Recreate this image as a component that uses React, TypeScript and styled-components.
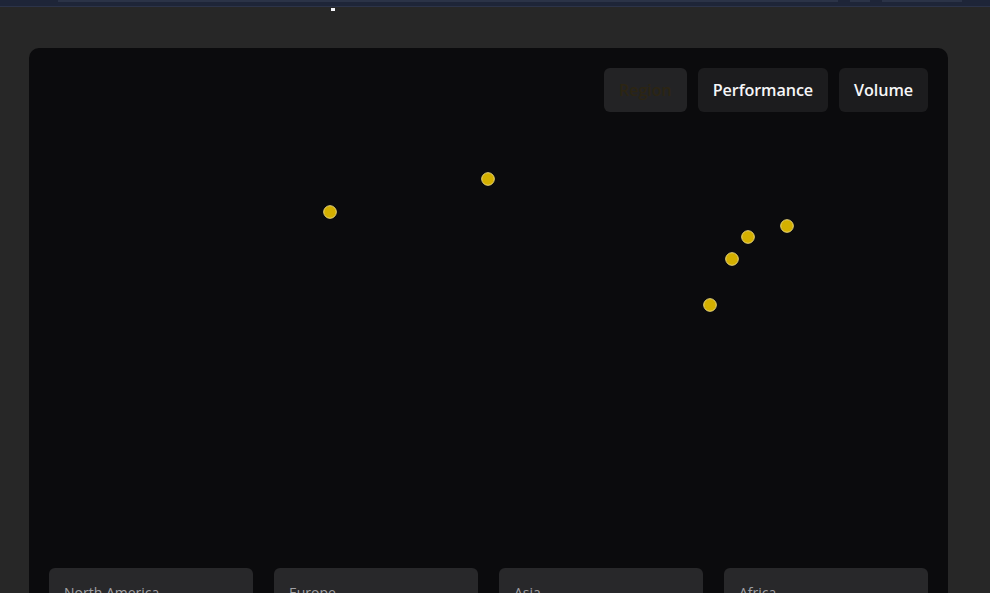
import React from "react";
import styled, { createGlobalStyle } from "styled-components";

const Global = createGlobalStyle`
  html, body { margin: 0; padding: 0; background: #272727; overflow: hidden; }
  body { font-family: "Open Sans", "Liberation Sans", sans-serif; }
`;

const TopBar = styled.div`
  position: relative;
  display: flex;
  align-items: flex-start;
  gap: 12px;
  height: 6px;
  padding-left: 58px;
  background: #1e2538;
  border-bottom: 1px solid #2c3348;
`;

const TopTrack = styled.div<{ $width: number }>`
  height: 2px;
  width: ${(p) => p.$width}px;
  background: #2b3347;
`;

const Marker = styled.div`
  position: absolute;
  left: 331px;
  top: 8px;
  width: 4px;
  height: 3px;
  background: #f4f4f8;
`;

const Main = styled.div`
  padding: 41px 42px 0 29px;
`;

const Card = styled.div`
  background: #0b0b0d;
  border-radius: 10px;
  padding: 20px 20px 0 20px;
  height: 600px;
  box-sizing: border-box;
`;

const Toolbar = styled.div`
  display: flex;
  justify-content: flex-end;
  gap: 11px;
`;

const Toggle = styled.button<{ $active?: boolean }>`
  height: 44px;
  padding: 0 15px;
  border: none;
  border-radius: 6px;
  font-family: "Open Sans", "Liberation Sans", sans-serif;
  font-weight: 600;
  font-size: 16.2px;
  letter-spacing: -0.1px;
  background: ${(p) => (p.$active ? "#232325" : "#1c1c1e")};
  color: ${(p) => (p.$active ? "#2c2513" : "#f6f6f8")};
  cursor: pointer;
`;

const Chart = styled.svg`
  display: block;
  width: 879px;
  height: 456px;
`;

const Grid = styled.div`
  display: grid;
  grid-template-columns: repeat(4, 1fr);
  gap: 21px;
`;

const RegionCard = styled.div`
  background: #28282a;
  border-radius: 6px;
  height: 90px;
  padding: 15px;
  box-sizing: border-box;
  color: #a0a0a4;
  font-size: 14px;
`;

const dots = [
  { x: 281, y: 100 },
  { x: 439, y: 67 },
  { x: 738, y: 114 },
  { x: 699, y: 125 },
  { x: 683, y: 147 },
  { x: 661, y: 193 },
];

const regions = ["North America", "Europe", "Asia", "Africa"];

export default function App() {
  return (
    <>
      <Global />
      <TopBar>
        <TopTrack $width={780} />
        <TopTrack $width={20} />
        <TopTrack $width={80} />
      </TopBar>
      <Marker />
      <Main>
        <Card>
          <Toolbar>
            <Toggle $active>Region</Toggle>
            <Toggle>Performance</Toggle>
            <Toggle>Volume</Toggle>
          </Toolbar>
          <Chart viewBox="0 0 879 456">
            {dots.map((d, i) => (
              <circle key={i} cx={d.x} cy={d.y} r={6.3} fill="#d4b000" stroke="#ead77c" strokeWidth={1} />
            ))}
          </Chart>
          <Grid>
            {regions.map((r) => (
              <RegionCard key={r}>{r}</RegionCard>
            ))}
          </Grid>
        </Card>
      </Main>
    </>
  );
}
